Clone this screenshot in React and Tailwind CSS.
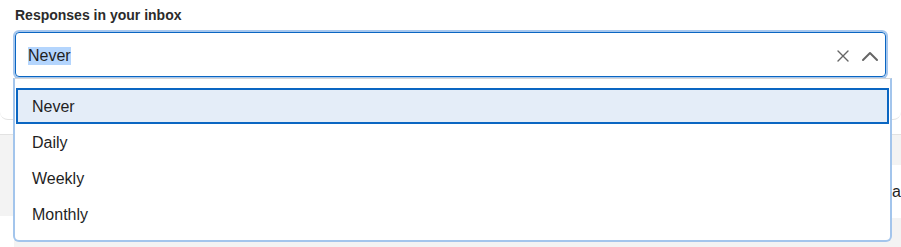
import React from 'react';

const options = ['Never', 'Daily', 'Weekly', 'Monthly'];

function ClearIcon() {
    return (
        <svg width="14" height="14" viewBox="0 0 14 14" fill="none" stroke="#666666" strokeWidth="1.4" strokeLinecap="round">
            <path d="M2 2l10 10M12 2L2 12" />
        </svg>
    );
}

function ChevronUp() {
    return (
        <svg width="18" height="12" viewBox="0 0 18 12" fill="none" stroke="#666666" strokeWidth="2" strokeLinecap="round" strokeLinejoin="round">
            <path d="M2 10l7-7 7 7" />
        </svg>
    );
}

export default function App() {
    const selected = 'Never';

    return (
        <div className="relative w-[901px] h-[247px] overflow-hidden bg-white text-[#1f1f1f]" style={{ fontFamily: '"Liberation Sans", Arial, sans-serif' }}>
            {/* page behind the open listbox */}
            <div className="h-[120px] border-b border-[#e2e2e2] rounded-b-[8px] px-[15px] pt-[5px]">
                <div className="h-[20px] leading-[20px] text-[14px] font-bold text-[#2b2b2b]">
                    Responses in your inbox
                </div>
                <div className="mt-[7px] h-[45px] flex items-center border border-[#0a66c2] rounded-[4px] ring-2 ring-[#a6c7ee] pl-[12px] pr-[6px] pt-[2px]">
                    <span className="text-[16px] leading-[18px] bg-[#b4d5fd] text-[#1f1f1f]">Never</span>
                    <div className="ml-auto flex items-center gap-[11px]">
                        <ClearIcon />
                        <ChevronUp />
                    </div>
                </div>
            </div>

            <div className="mt-[14px] border-t border-[#e2e2e2] flex">
                <div className="w-[14px] h-[81px] bg-[#f3f3f3]"></div>
                <div className="flex-1">
                    <div className="h-[30px] bg-[#f3f3f3]"></div>
                    <div className="h-[53px] flex items-center justify-end text-[16px]">a</div>
                    <div className="h-[40px] bg-[#f3f3f3]"></div>
                </div>
            </div>

            {/* open listbox */}
            <div className="absolute left-[13px] top-[78px] w-[879px] h-[164px] bg-white border-2 border-t border-[#a3c5ec] border-t-[#d6d6d6] rounded-b-[6px] pt-[9px]">
                {options.map((opt) => (
                    <div
                        key={opt}
                        className={
                            opt === selected
                                ? 'mx-[1px] h-[36px] flex items-center pl-[14px] pt-[1px] text-[16px] border-2 border-[#0a66c2] bg-[#e4edf8]'
                                : 'mx-[1px] h-[36px] flex items-center pl-[14px] pt-[1px] text-[16px] border-2 border-transparent'
                        }
                    >
                        {opt}
                    </div>
                ))}
            </div>
        </div>
    );
}
